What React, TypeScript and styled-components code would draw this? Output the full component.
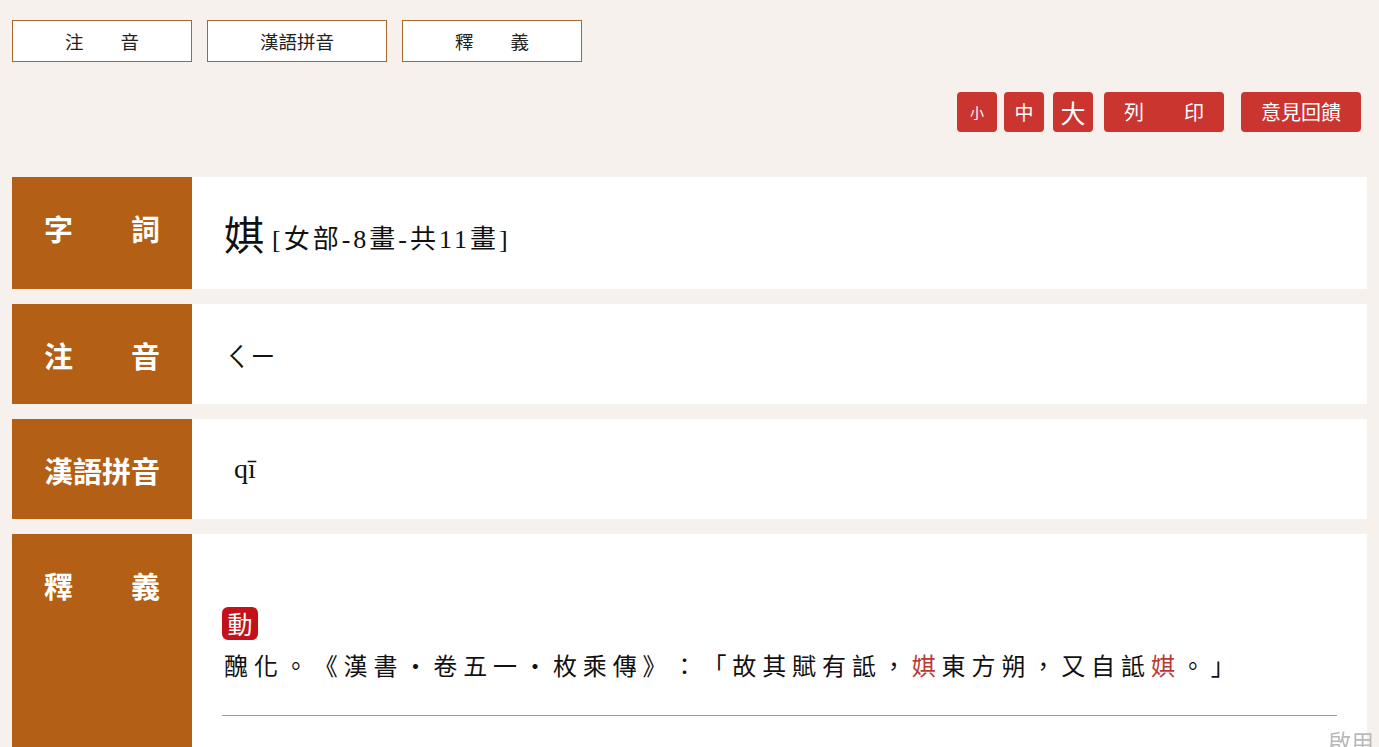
import React from "react";
import styled, { createGlobalStyle } from "styled-components";

const GlobalStyle = createGlobalStyle`
  html, body { margin: 0; padding: 0; overflow: hidden; }
  body {
    background: #f6f1ed;
    font-family: "Noto Sans CJK TC", "Noto Sans", sans-serif;
    color: #222;
    text-spacing-trim: space-all;
  }
`;

const Page = styled.div`
  padding: 20px 12px 0 12px;
  display: flex;
  flex-direction: column;
`;

const TabBar = styled.nav`
  display: flex;
  gap: 15px;
`;

const Tab = styled.a`
  box-sizing: border-box;
  width: 180px;
  height: 42px;
  display: flex;
  align-items: center;
  justify-content: center;
  background: #fff;
  border: 1px solid #a7672d;
  font-size: 18.5px;
  color: #222;
  text-decoration: none;
  white-space: pre;
`;

const Toolbar = styled.div`
  display: flex;
  justify-content: flex-end;
  margin-top: 30px;
  padding-right: 6px;
  margin-bottom: 45px;
`;

const ToolButton = styled.button<{ $w: number; $fs: number; $ml: number }>`
  box-sizing: border-box;
  width: ${(p) => p.$w}px;
  height: 40px;
  margin-left: ${(p) => p.$ml}px;
  padding: 0;
  border: none;
  border-radius: 4px;
  background: #cb3530;
  color: #fff;
  font-family: "Noto Sans CJK TC", sans-serif;
  font-size: ${(p) => p.$fs}px;
  line-height: 40px;
  white-space: pre;
  cursor: pointer;
`;

const Row = styled.section<{ $h: number }>`
  display: flex;
  min-height: ${(p) => p.$h}px;
  background: #fff;
  margin-bottom: 15px;
`;

const Label = styled.h2`
  box-sizing: border-box;
  flex: 0 0 180px;
  margin: 0;
  padding-top: 33px;
  background: #b35f15;
  color: #fff;
  text-align: center;
  font-family: "Noto Sans CJK TC", sans-serif;
  font-weight: 700;
  font-size: 29px;
  line-height: 36px;
  white-space: pre;
`;

const Content = styled.div<{ $pl?: number }>`
  flex: 1;
  display: flex;
  align-items: center;
  padding-left: ${(p) => p.$pl ?? 32}px;
  padding-right: 30px;
`;

const BigChar = styled.span`
  font-family: "Noto Sans CJK TC", serif;
  font-size: 40px;
  color: #111;
  margin-right: 8px;
`;

const Radical = styled.span`
  font-family: "Liberation Serif", "Noto Sans CJK TC", serif;
  font-size: 26px;
  letter-spacing: 3px;
  color: #111;
  margin-top: 6px;
`;

const Zhuyin = styled.span`
  font-family: "Noto Sans CJK TC", sans-serif;
  font-size: 26px;
  color: #111;
`;

const Pinyin = styled.span`
  font-family: "Liberation Serif", serif;
  font-size: 28px;
  color: #111;
`;

const DefBlock = styled.div`
  flex: 1;
  display: flex;
  flex-direction: column;
  align-items: flex-start;
  padding: 73px 30px 0 30px;
`;

const PosBadge = styled.span`
  display: inline-flex;
  align-items: center;
  justify-content: center;
  width: 36px;
  height: 33px;
  border-radius: 6px;
  background: #c4121a;
  color: #fff;
  font-family: "Noto Sans CJK TC", sans-serif;
  font-size: 25px;
  line-height: 33px;
`;

const DefLine = styled.p`
  margin: 0;
  padding-left: 2px;
  font-family: "Noto Sans CJK TC", serif;
  font-size: 24px;
  line-height: 50px;
  letter-spacing: 5.9px;
  color: #111;
  white-space: nowrap;
  text-spacing-trim: space-all;
  font-feature-settings: "fwid" 1;
`;

const Hl = styled.span`
  color: #b83a34;
`;

const Rule = styled.hr`
  align-self: stretch;
  margin: 25px 0 0 0;
  border: none;
  border-top: 1px solid #9a9a9a;
`;

const Watermark = styled.div`
  position: fixed;
  left: 1328px;
  top: 724px;
  font-family: "Noto Sans CJK TC", sans-serif;
  font-size: 23px;
  color: #b8b8b8;
  white-space: nowrap;
  pointer-events: none;
`;

export default function App() {
  return (
    <>
      <GlobalStyle />
      <Page>
        <TabBar>
          <Tab href="#">{"注　　音"}</Tab>
          <Tab href="#">漢語拼音</Tab>
          <Tab href="#">{"釋　　義"}</Tab>
        </TabBar>
        <Toolbar>
          <ToolButton $w={40} $fs={14} $ml={0}>小</ToolButton>
          <ToolButton $w={40} $fs={19} $ml={7}>中</ToolButton>
          <ToolButton $w={40} $fs={25} $ml={9}>大</ToolButton>
          <ToolButton $w={120} $fs={20} $ml={11}>{"列　　印"}</ToolButton>
          <ToolButton $w={120} $fs={20} $ml={17}>意見回饋</ToolButton>
        </Toolbar>
        <Row $h={112}>
          <Label>{"字　　詞"}</Label>
          <Content>
            <BigChar>娸</BigChar>
            <Radical>[女部-8畫-共11畫]</Radical>
          </Content>
        </Row>
        <Row $h={100}>
          <Label>{"注　　音"}</Label>
          <Content>
            <Zhuyin>ㄑㄧ</Zhuyin>
          </Content>
        </Row>
        <Row $h={100}>
          <Label>漢語拼音</Label>
          <Content $pl={42}>
            <Pinyin>qī</Pinyin>
          </Content>
        </Row>
        <Row $h={213}>
          <Label>{"釋　　義"}</Label>
          <DefBlock>
            <PosBadge>動</PosBadge>
            <DefLine>
              醜化。《漢書・卷五一・枚乘傳》：「故其賦有詆，<Hl>娸</Hl>東方朔，又自詆<Hl>娸</Hl>。」
            </DefLine>
            <Rule />
          </DefBlock>
        </Row>
      </Page>
      <Watermark>啟用 Windows</Watermark>
    </>
  );
}
